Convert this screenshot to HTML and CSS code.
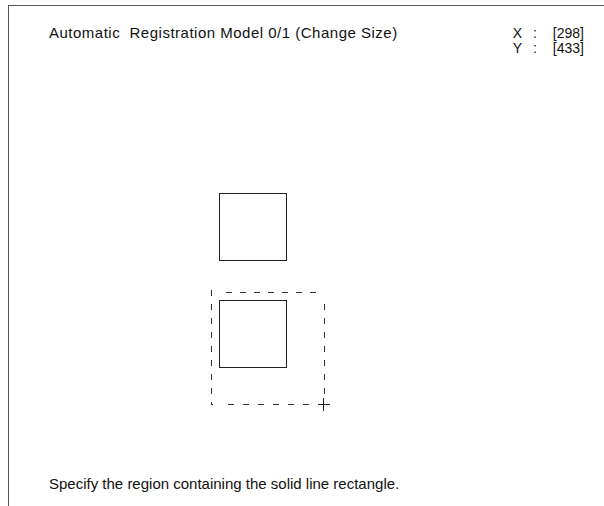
FILE: index.html
```html
<!DOCTYPE html>
<html>
<head>
<meta charset="utf-8">
<link rel="stylesheet" href="styles.css">
</head>
<body>
<div class="frame">
  <div class="header">
    <div class="title">Automatic&nbsp; Registration Model 0/1 (Change Size)</div>
    <div class="coords">
      <span>X</span><span>:</span><span>[298]</span>
      <span>Y</span><span>:</span><span>[433]</span>
    </div>
  </div>
  <svg class="canvas" width="595" height="420" viewBox="0 0 595 420">
    <g transform="translate(-9,-54)" fill="none" stroke="#222" stroke-width="1">
      <rect x="219.5" y="193.5" width="67" height="67"/>
      <rect x="219.5" y="300.5" width="67" height="67"/>
      <g stroke="#333" stroke-dasharray="6 8">
        <line x1="226" y1="292.5" x2="324" y2="292.5"/>
        <line x1="211.5" y1="290" x2="211.5" y2="404"/>
        <line x1="211" y1="404.5" x2="318" y2="404.5" stroke-dasharray="2 15 6 9 6 9 6 9 6 9 6 9 6 9"/>
        <line x1="324.5" y1="304" x2="324.5" y2="398"/>
      </g>
      <line x1="318" y1="404.5" x2="330" y2="404.5"/>
      <line x1="323.5" y1="398" x2="323.5" y2="411"/>
    </g>
  </svg>
  <div class="footer">Specify the region containing the solid line rectangle.</div>
</div>
</body>
</html>
```
FILE: styles.css
```css
html, body {
  margin: 0;
  padding: 0;
  background: #fff;
}
body {
  font-family: "Liberation Sans", Arial, sans-serif;
  font-size: 15px;
  color: #111;
}
.frame {
  margin: 5px 0 0 8px;
  border-top: 1px solid #555;
  border-left: 1px solid #555;
  height: 501px;
  box-sizing: border-box;
  display: flex;
  flex-direction: column;
}
.header {
  display: flex;
  justify-content: space-between;
  padding: 18px 20px 0 40px;
  height: 30px;
  line-height: 17px;
}
.title {
  letter-spacing: 0.5px;
}
.coords {
  display: grid;
  grid-template-columns: auto auto auto;
  column-gap: 11px;
  font-size: 14px;
  line-height: 15px;
  padding-top: 2px;
}
.coords span:nth-child(3n) {
  margin-left: 5px;
}
.canvas {
  display: block;
}
.footer {
  padding: 1px 0 0 40px;
  line-height: 17px;
}
```
